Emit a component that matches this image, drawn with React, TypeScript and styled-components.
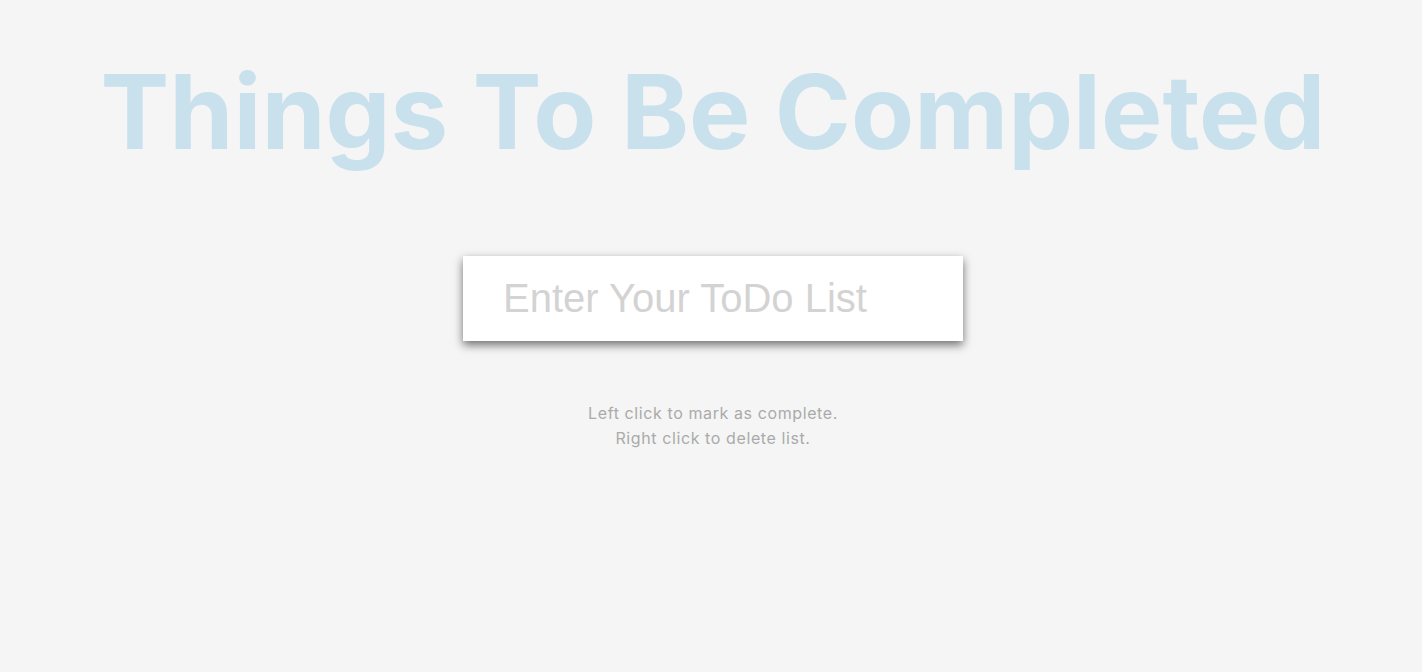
import React from "react";
import styled, { createGlobalStyle } from "styled-components";

const GlobalStyle = createGlobalStyle`
  html, body {
    margin: 0;
    padding: 0;
    background: #f5f5f5;
  }
  body {
    font-family: "Inter", "Liberation Sans", sans-serif;
  }
`;

const Page = styled.main`
  min-height: 672px;
  box-sizing: border-box;
  padding-left: 4px;
  display: flex;
  flex-direction: column;
  align-items: center;
  background: #f5f5f5;
`;

const Title = styled.h1`
  margin: 49px 0 0;
  font-family: "Inter", sans-serif;
  font-weight: 700;
  font-size: 103px;
  line-height: 126px;
  letter-spacing: 0;
  color: #c8e1ed;
  white-space: nowrap;
`;

const Form = styled.form`
  margin-top: 81px;
`;

const TodoInput = styled.input`
  box-sizing: border-box;
  width: 500px;
  height: 85px;
  padding: 0 40px;
  border: none;
  outline: none;
  background: #fff;
  font-family: "Liberation Sans", Arial, sans-serif;
  font-size: 40px;
  color: #555;
  box-shadow: 0 4px 9px rgba(0, 0, 0, 0.55);
  &::placeholder {
    color: #d3d3d3;
  }
`;

const Hint = styled.p`
  margin: 60px 0 0;
  text-align: center;
  font-family: "Inter", sans-serif;
  font-size: 16px;
  letter-spacing: 0.6px;
  line-height: 25px;
  color: #aaaaaa;
`;

export default function App() {
  return (
    <>
      <GlobalStyle />
      <Page>
        <Title>Things To Be Completed</Title>
        <Form onSubmit={(e) => e.preventDefault()}>
          <TodoInput placeholder="Enter Your ToDo List" />
        </Form>
        <Hint>
          Left click to mark as complete.
          <br />
          Right click to delete list.
        </Hint>
      </Page>
    </>
  );
}
